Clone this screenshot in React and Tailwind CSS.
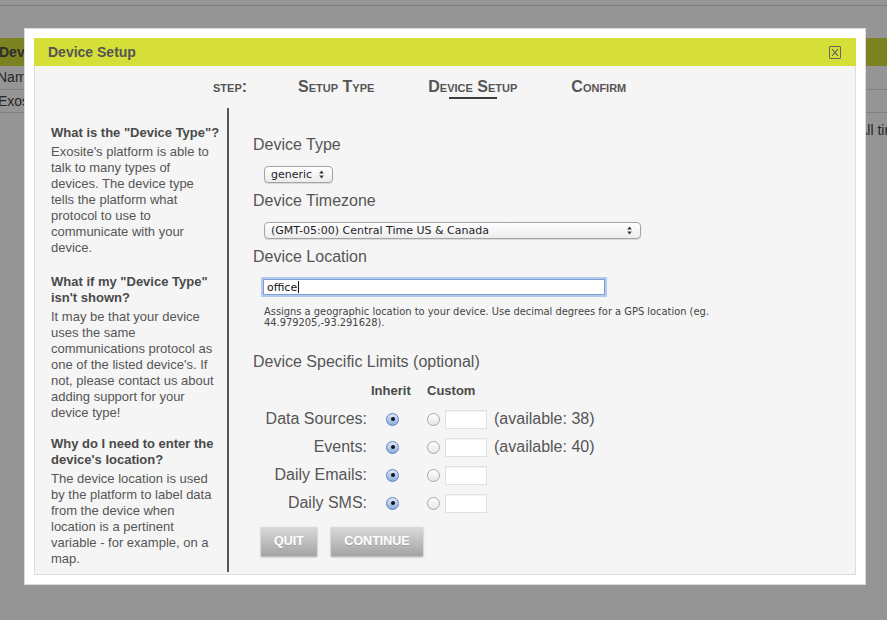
import React from 'react';

/**
 * Device setup wizard shown over the portal page
 */

const helpBlocks = [
  {
    title: 'What is the "Device Type"?',
    body: "Exosite's platform is able to talk to many types of devices. The device type tells the platform what protocol to use to communicate with your device.",
    gap: '',
  },
  {
    title: 'What if my "Device Type" isn\'t shown?',
    body: "It may be that your device uses the same communications protocol as one of the listed device's. If not, please contact us about adding support for your device type!",
    gap: 'mt-[18px]',
  },
  {
    title: "Why do I need to enter the device's location?",
    body: 'The device location is used by the platform to label data from the device when location is a pertinent variable - for example, on a map.',
    gap: 'mt-[15px]',
  },
];

const limits = [
  { label: 'Data Sources:', available: '(available: 38)' },
  { label: 'Events:', available: '(available: 40)' },
  { label: 'Daily Emails:', available: null },
  { label: 'Daily SMS:', available: null },
];

const SelectArrows = () => (
  <svg width="5" height="9" viewBox="0 0 5 9" className="shrink-0">
    <path d="M2.5 0.5 L4.8 3.5 L0.2 3.5 Z" fill="#333" />
    <path d="M2.5 8.5 L4.8 5.5 L0.2 5.5 Z" fill="#333" />
  </svg>
);

const FakeSelect = ({ value, width }) => (
  <div
    className={`flex h-[17px] items-center justify-between rounded-[4px] border border-[#a3a3a3] bg-linear-to-b from-white to-[#ececec] pl-[6px] pr-[8px] font-['DejaVu_Sans',sans-serif] text-[11px] text-[#1e1e2a] shadow-[0_1px_1px_rgba(0,0,0,0.12)] ${width}`}
  >
    <span className="whitespace-nowrap leading-none">{value}</span>
    <SelectArrows />
  </div>
);

const Radio = ({ checked }) =>
  checked ? (
    <div className="flex h-[13px] w-[13px] items-center justify-center rounded-full border border-[#5c80bb] bg-linear-to-b from-[#dfeafa] to-[#88ace3]">
      <div className="h-[4px] w-[4px] rounded-full bg-[#151515]" />
    </div>
  ) : (
    <div className="h-[13px] w-[13px] rounded-full border border-[#a9a9a9] bg-linear-to-b from-white to-[#e6e6e6]" />
  );

const StepLabel = ({ children, active, className = '' }) => (
  <span className={`relative whitespace-nowrap ${className}`}>
    {children}
    {active && (
      <span className="absolute left-1/2 top-[19px] h-[1.5px] w-[48px] -translate-x-1/2 bg-[#3e3e3e]" />
    )}
  </span>
);

const GrayButton = ({ children, width }) => (
  <button
    className={`h-[29px] ${width} bg-linear-to-b from-[#dadada] to-[#a4a4a4] text-[12.5px] font-bold text-white shadow-[0_1px_2px_rgba(0,0,0,0.35)] [text-shadow:0_1px_0_rgba(0,0,0,0.15)]`}
  >
    {children}
  </button>
);

const App = () => {
  return (
    <div className="relative h-[620px] w-[887px] overflow-hidden bg-white font-['Liberation_Sans',Arial,sans-serif]">
      {/* Portal page behind the overlay */}
      <div className="h-[5px]" />
      <div className="h-px bg-[#d4d4d4]" />
      <div className="h-[32px]" />
      <div className="flex h-[28px] items-center bg-[#d5df37] text-[14px] font-bold text-[#4f4f4f]">
        <span className="-ml-[1px]">Devices</span>
      </div>
      <div className="flex h-[24px] items-center border-b border-[#dcdcdc] text-[14px] text-[#444]">
        <span className="-ml-[3px]">Name</span>
      </div>
      <div className="flex h-[23px] items-center border-b border-[#dcdcdc] text-[14px] text-[#444]">
        <span className="-ml-[2px]">Exosite</span>
      </div>
      <div className="flex h-[34px] items-center whitespace-nowrap pl-[858px] text-[14px] text-[#444]">
        All time
      </div>

      {/* Overlay */}
      <div className="absolute inset-0 bg-black/[0.415]" />

      {/* Modal */}
      <div className="absolute left-[25px] top-[29px] h-[555px] w-[840px] bg-white p-[9px] shadow-[0_0_0_1px_#dcdcdc]">
        <div className="flex h-full flex-col">
          {/* Title bar */}
          <div className="flex h-[28px] shrink-0 items-center justify-between bg-[#d5df37] pl-[14px] pr-[15px]">
            <span className="text-[14px] font-bold text-[#545454]">Device Setup</span>
            <div className="flex h-[13px] w-[12px] items-center justify-center rounded-[1px] border border-[#666]">
              <svg width="8" height="9" viewBox="0 0 8 9">
                <path d="M1 1 L7 8 M7 1 L1 8" stroke="#555" strokeWidth="1.1" fill="none" />
              </svg>
            </div>
          </div>

          <div className="flex min-h-0 flex-1 flex-col border-x border-b border-[#dddddd] bg-[#f5f5f5]">
            {/* Steps */}
            <div className="flex h-[42px] shrink-0 items-center pl-[178px] text-[16px] font-bold leading-[18px] text-[#555] [font-variant:small-caps]">
              <StepLabel>step:</StepLabel>
              <StepLabel className="ml-[51px]">Setup Type</StepLabel>
              <StepLabel className="ml-[54px]" active>
                Device Setup
              </StepLabel>
              <StepLabel className="ml-[54px]">Confirm</StepLabel>
            </div>

            <div className="flex min-h-0 flex-1 pb-[2px]">
              {/* Help sidebar */}
              <div className="w-[192px] shrink-0 pl-[16px] pr-[6px] pt-[17px] text-[13px] leading-[16px] text-[#555]">
                {helpBlocks.map((block) => (
                  <div key={block.title} className={block.gap}>
                    <div className="mb-[3px] font-bold text-[#4a4a4a]">{block.title}</div>
                    <p className="pr-[4px]">{block.body}</p>
                  </div>
                ))}
              </div>
              <div className="w-[2px] shrink-0 bg-[#565656]" />

              {/* Form */}
              <div className="flex-1 pl-[24px] pt-[28px] text-[#555]">
                <div className="text-[16px] leading-[18px]">Device Type</div>
                <div className="ml-[11px] mt-[12px]">
                  <FakeSelect value="generic" width="w-[69px]" />
                </div>

                <div className="mt-[9px] text-[16px] leading-[18px]">Device Timezone</div>
                <div className="ml-[11px] mt-[12px]">
                  <FakeSelect value="(GMT-05:00) Central Time US & Canada" width="w-[377px]" />
                </div>

                <div className="mt-[9px] text-[16px] leading-[18px]">Device Location</div>
                <div className="ml-[10px] mt-[13px] flex h-[16px] w-[342px] items-center border border-[#7b9fd3] bg-white pl-[3px] font-['DejaVu_Sans',sans-serif] text-[11px] text-[#111] shadow-[0_0_0_2px_#b3cbef]">
                  <span className="leading-none">office</span>
                  <span className="ml-[1px] h-[12px] w-px bg-[#111]" />
                </div>
                <p className="ml-[11px] mt-[11px] w-[462px] font-['DejaVu_Sans',sans-serif] text-[9.9px] leading-[11px] text-[#444]">
                  Assigns a geographic location to your device. Use decimal degrees for a GPS location (eg. 44.979205,-93.291628).
                </p>

                <div className="mt-[25px] text-[16px] leading-[18px]">Device Specific Limits (optional)</div>

                <div className="mt-[12px] flex text-[13px] font-bold leading-[16px] text-[#4a4a4a]">
                  <div className="w-[114px]" />
                  <div className="w-[44px] pl-[4px]">Inherit</div>
                  <div className="pl-[16px]">Custom</div>
                </div>

                <div className="mt-[6px]">
                  {limits.map((row) => (
                    <div key={row.label} className="flex h-[28px] items-center text-[16px]">
                      <div className="w-[114px] text-right">{row.label}</div>
                      <div className="flex w-[44px] pl-[19px]">
                        <Radio checked />
                      </div>
                      <div className="ml-[16px]">
                        <Radio />
                      </div>
                      <div className="ml-[5px] h-[19px] w-[42px] border border-[#e0e0e0] bg-white shadow-[inset_0_1px_1px_rgba(0,0,0,0.05)]" />
                      {row.available && <span className="ml-[7px]">{row.available}</span>}
                    </div>
                  ))}
                </div>

                <div className="ml-[8px] mt-[10px] flex gap-[14px]">
                  <GrayButton width="w-[56px]">QUIT</GrayButton>
                  <GrayButton width="w-[92px]">CONTINUE</GrayButton>
                </div>
              </div>
            </div>
          </div>
        </div>
      </div>
    </div>
  );
};

export default App;
